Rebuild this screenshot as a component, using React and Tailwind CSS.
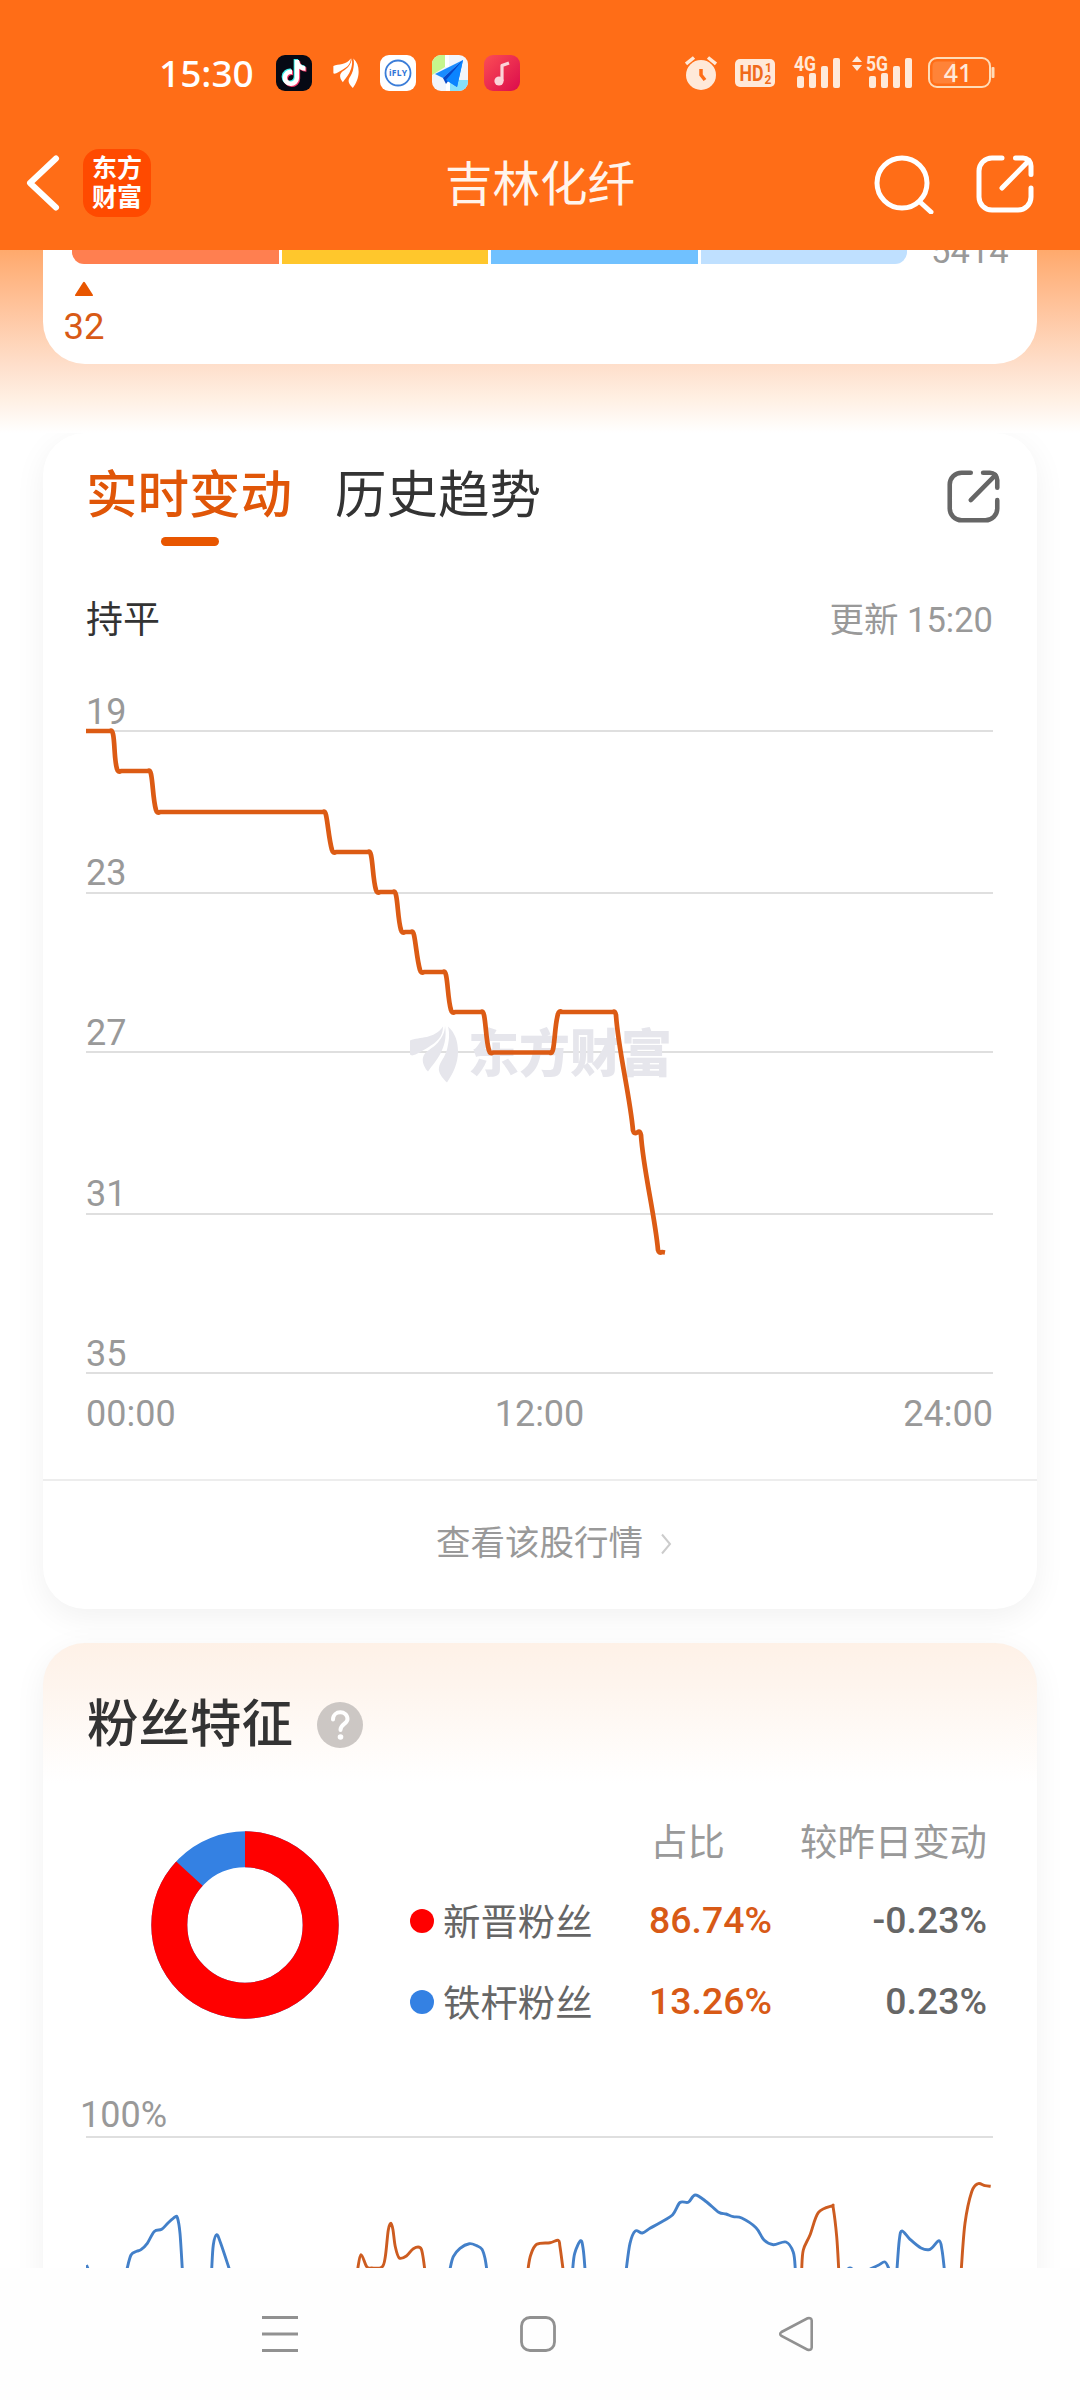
import React from 'react';
import { FaTiktok } from 'react-icons/fa6';

// [x, y] pairs, straight runs of the ranking line
const RANK_STEPS = [
  [[0, 0], [26, 0]],
  [[32, 40], [64, 40]],
  [[71, 81], [239, 81]],
  [[247, 121], [284, 121]],
  [[291, 161], [309, 161]],
  [[316, 201], [327, 201]],
  [[335, 241], [359, 241]],
  [[366, 281], [397, 281]],
  [[404, 321.5], [466, 321.5]],
  [[473, 281], [529, 281]],
  [[548, 401.5], [554, 401]],
  [[573, 521], [579, 521.5]],
];

const BLUE_LINES = [
  [[0.5, 127], [2.5, 132]],
  [[41, 131], [45, 117], [50.7, 113.3], [55, 111.7], [61.3, 105.3], [68.3, 93.5], [75.7, 91.3], [82.3, 84.7], [89, 79], [91.5, 80], [94, 95.3], [96.3, 131]],
  [[125.7, 131], [127.3, 107], [130.7, 96.7], [134.7, 105.3], [143.3, 131]],
  [[364, 131], [367.3, 118.7], [374, 110.3], [383.3, 105.7], [390.7, 107.7], [396, 111.3], [399, 120.3], [400.7, 131]],
  [[486.7, 131], [488.7, 115.3], [494.7, 102.7], [497.3, 112], [499, 131]],
  [[540.3, 131], [544, 105.3], [549.3, 93], [556.3, 95], [564, 90.3], [574, 84.7], [586.7, 76.7], [594, 64.5], [602.3, 64.3], [609.3, 57], [620.7, 64], [632.7, 74.3], [640, 76], [647.3, 78.7], [655.7, 80], [670, 89.7], [678, 102], [687.3, 106.7], [700, 104], [707.3, 114.3], [709.3, 131]],
  [[761, 131.5], [764, 130], [767, 131.5]],
  [[784, 131], [792.3, 127.3], [799, 124], [803, 131]],
  [[811, 131], [813.3, 102], [816, 93], [824, 101.3], [835, 110], [844, 111.3], [853, 102.7], [856, 112], [858.3, 131]],
];

const ORANGE_LINES = [
  [[271.7, 131], [275, 116.7], [280.7, 128.7], [285.7, 130], [296, 129], [299.3, 118.7], [302.3, 92], [305, 85.3], [307, 92], [309.3, 108.7], [313.3, 120], [320.7, 117.7], [327.3, 110.7], [334.3, 109.7], [336.7, 117], [338.7, 131]],
  [[442, 131], [444.7, 117], [450.7, 106.3], [464, 104.7], [472.3, 102.3], [474, 108.7], [477, 131]],
  [[715.7, 131], [717.3, 112], [724, 97], [732.3, 74.7], [745.7, 68], [747.3, 70.3], [750.7, 98.7], [752.7, 131]],
  [[875.3, 131], [879, 85.3], [885.7, 53.7], [892, 45.7], [899, 47.7], [904.7, 48.3]],
];

const FANS = [
  { name: '新晋粉丝', ratio: '86.74%', diff: '-0.23%', dot: 'bg-[#ff0000]' },
  { name: '铁杆粉丝', ratio: '13.26%', diff: '0.23%', dot: 'bg-[#3481e3]' },
];

const stepPath = (steps) =>
  steps.map(([a, b], i) => {
    if (i === 0) return `M${a[0]} ${a[1]} L${b[0] - 2} ${b[1]}`;
    const prev = steps[i - 1][1];
    const dir = a[1] > prev[1] ? 1 : -1;
    const h = (a[1] - prev[1]) * 0.3;
    return `Q${prev[0]} ${prev[1] - dir * 1.5} ${prev[0] + 1} ${prev[1] + dir * 3} C${prev[0] + 3} ${prev[1] + h} ${a[0] - 4} ${a[1] - h} ${a[0] - 1} ${a[1] - dir * 2} Q${a[0]} ${a[1] + dir * 2} ${a[0] + 3} ${a[1]} L${b[0] - (i < steps.length - 1 ? 2 : 0)} ${b[1]}`;
  }).join(' ');

// Catmull-Rom through the points
const smooth = (pts) => {
  let d = `M${pts[0][0]} ${pts[0][1]}`;
  for (let i = 0; i < pts.length - 1; i++) {
    const p0 = pts[i - 1] || pts[i];
    const p1 = pts[i];
    const p2 = pts[i + 1];
    const p3 = pts[i + 2] || p2;
    d += ` C${p1[0] + (p2[0] - p0[0]) / 6} ${p1[1] + (p2[1] - p0[1]) / 6} ${p2[0] - (p3[0] - p1[0]) / 6} ${p2[1] - (p3[1] - p1[1]) / 6} ${p2[0]} ${p2[1]}`;
  }
  return d;
};

function Wing({ className }) {
  return (
    <svg viewBox="0 0 48 57" className={className} fill="currentColor">
      <path d="M0 15 C10 11 24 14 33 1 C33 12 26 17 18 22 C11 26 7 29 2 30 L0 29 Z" />
      <path d="M35 0 C37 13 34 21 30 29 C26 36 22 40 18 46 C14 42 12 36 13 32 C15 25 23 23 28 17 C32 12 35 7 35 0 Z" />
      <path d="M38 1 C45 7 48 16 48 26 C48 38 43 48 37 57 C32 52 28 47 29 42 C30 36 35 32 37 24 C39 16 40 8 38 1 Z" />
    </svg>
  );
}

function ShareIcon({ className }) {
  return (
    <svg viewBox="0 0 58 58" className={className} fill="none" stroke="currentColor" strokeWidth="5" strokeLinecap="round" strokeLinejoin="round">
      <path d="M26 3 H16 A13 13 0 0 0 3 16 V42 A13 13 0 0 0 16 55 H42 A13 13 0 0 0 55 42 V33" />
      <path d="M39.500 3 H47 A8 8 0 0 1 55 11 V19.500" />
      <path d="M53 5.500 L26 33" />
    </svg>
  );
}

function Signal() {
  return (
    <>
      <rect x="3" y="20" width="7" height="12" rx="2" />
      <rect x="15" y="17" width="7" height="15" rx="2" />
      <rect x="27" y="10" width="7" height="22" rx="2" />
      <rect x="39" y="2" width="7" height="30" rx="2" />
    </>
  );
}

function StatusBar() {
  return (
    <div className="h-[110px] pt-[35px] pl-[159px] pr-[85px] flex items-center justify-between">
      <div className="flex items-center">
        <span className="w-[117px] text-[37px] leading-none font-medium font-['Noto_Sans',sans-serif]">15:30</span>
        <div className="flex gap-4">
          <div className="relative w-9 h-9 rounded-[9px] bg-[#060914]">
            <FaTiktok size={26} className="absolute left-[4px] top-[4px] text-[#3ff0ea]" />
            <FaTiktok size={26} className="absolute left-[6px] top-[6px] text-[#f5396a]" />
            <FaTiktok size={26} className="absolute left-[5px] top-[5px] text-white" />
          </div>
          <div className="w-9 h-9 flex items-center justify-center">
            <Wing className="w-[26px] h-[30px]" />
          </div>
          <svg viewBox="0 0 36 36" className="w-9 h-9">
            <rect width="36" height="36" rx="9" fill="#fff" />
            <circle cx="18" cy="18" r="12.500" fill="none" stroke="#3b7dd8" strokeWidth="1.800" />
            <text x="18" y="21" textAnchor="middle" fontSize="8.500" fontWeight="700" fontFamily="Noto Sans" fill="#2f74d6" textLength="18">iFLY</text>
          </svg>
          <svg viewBox="0 0 36 36" className="w-9 h-9">
            <clipPath id="mapClip"><rect width="36" height="36" rx="9" /></clipPath>
            <g clipPath="url(#mapClip)">
              <rect width="36" height="36" fill="#f2f5fb" />
              <path d="M0 0 H13 V12 L0 20 Z" fill="#c6f68d" />
              <path d="M18 25 H36 V36 H18 Z" fill="#86e0fb" />
              <path d="M13 0 H17 V12 H13 Z M14 26 H18 V36 H14 Z" fill="#fff" />
            </g>
            <path d="M31 5 L3 19 L11 23 Z" fill="#1a8bff" />
            <path d="M31 5 L11 23 L25 32 Z" fill="#0a7dfb" />
            <path d="M11 23 L31 5 L14 29 Z" fill="#0748c9" />
            <path d="M31 5 L14 25 L25 32 Z" fill="#0b84ff" />
          </svg>
          <svg viewBox="0 0 36 36" className="w-9 h-9">
            <linearGradient id="musicBg" x1="0" y1="0" x2="1" y2="1">
              <stop offset="0" stopColor="#fb4d55" />
              <stop offset="1" stopColor="#db0b4c" />
            </linearGradient>
            <rect width="36" height="36" rx="9" fill="url(#musicBg)" />
            <circle cx="15" cy="26" r="4.600" fill="#fbd3d8" />
            <path d="M18 26 V10.500 L25 8" fill="none" stroke="#fbd3d8" strokeWidth="3.200" strokeLinejoin="round" />
          </svg>
        </div>
      </div>

      <div className="flex items-center text-[#ffe9d9]">
        <svg viewBox="0 0 32 34" className="w-[32px] h-[34px]" fill="none" stroke="currentColor">
          <circle cx="16" cy="19" r="15" fill="currentColor" stroke="none" />
          <path d="M1 8 L9 1.500 M31 8 L23 1.500" strokeWidth="3.500" />
          <path d="M16 13 V19 L20 24" stroke="#ff6d17" strokeWidth="3.500" />
        </svg>
        <svg viewBox="0 0 40 28" className="ml-[18px] w-[40px] h-[28px]">
          <rect width="40" height="28" rx="5" fill="currentColor" />
          <g fill="#f06a1a" fontWeight="700" fontFamily="Roboto">
            <text x="4.500" y="22" fontSize="22" textLength="24" lengthAdjust="spacingAndGlyphs">HD</text>
            <text x="30" y="13" fontSize="12">1</text>
            <text x="29.500" y="25" fontSize="12">2</text>
          </g>
        </svg>
        <svg viewBox="0 0 46 33" className="ml-[19px] w-[46px] h-[33px] overflow-visible" fill="currentColor">
          <text x="0" y="15" fontSize="21" fontWeight="700" fontFamily="Roboto" textLength="22" lengthAdjust="spacingAndGlyphs">4G</text>
          <Signal />
        </svg>
        <svg viewBox="-14 0 60 33" className="ml-[12px] w-[60px] h-[33px] overflow-visible" fill="currentColor">
          <path d="M-14 6 L-9 0 L-4 6 Z M-14 9 L-9 15 L-4 9 Z" />
          <text x="0" y="15" fontSize="21" fontWeight="700" fontFamily="Roboto" textLength="22" lengthAdjust="spacingAndGlyphs">5G</text>
          <Signal />
        </svg>
        <svg viewBox="0 0 67 31" className="ml-[16px] w-[67px] h-[31px] overflow-visible">
          <rect x="1" y="1" width="61" height="29" rx="8" fill="none" stroke="#ffdcb8" strokeWidth="2" />
          <path d="M9 4.500 H27 V26.500 H9 Q4.500 26.500 4.500 22 V9 Q4.500 4.500 9 4.500 Z" fill="#ff8338" />
          <rect x="63.500" y="10" width="3" height="11" rx="1" fill="#ffdcb8" />
          <text x="30" y="24.500" textAnchor="middle" fontSize="25" fontWeight="500" fontFamily="Noto Sans" fill="#ffe9d9">41</text>
        </svg>
      </div>
    </div>
  );
}

function Header() {
  return (
    <div className="h-[140px] pt-[5px] px-[46px] grid grid-cols-[1fr_auto_1fr] items-center">
      <div className="-ml-[20px] flex items-center">
        <svg viewBox="0 0 34 58" className="w-[34px] h-[58px]" fill="none" stroke="currentColor" strokeWidth="6" strokeLinecap="round" strokeLinejoin="round">
          <path d="M30 4.500 L4 29 L30 53.500" />
        </svg>
        <div className="ml-[23px] pb-[3px] w-[68px] h-[68px] rounded-[16px] bg-[#ff4a00] flex flex-col items-center justify-center text-[25px] leading-[29px] font-bold font-['Noto_Sans_CJK_SC',sans-serif]">
          <span>东方</span>
          <span>财富</span>
        </div>
      </div>
      <h1 className="pb-[3px] text-[47.500px] leading-[60px] text-[#fff4ec] font-['Noto_Sans_CJK_SC',sans-serif]">吉林化纤</h1>
      <div className="pt-[2px] flex items-center justify-end gap-[42px]">
        <svg viewBox="0 0 60 60" className="w-[60px] h-[60px]" fill="none" stroke="currentColor" strokeWidth="5" strokeLinecap="round">
          <circle cx="28" cy="29" r="25" />
          <path d="M46 48 L57 58" />
        </svg>
        <ShareIcon className="w-[58px] h-[58px]" />
      </div>
    </div>
  );
}

function RankCard() {
  return (
    <div className="mx-[43px] h-[114px] rounded-b-[42px] bg-white">
      <div className="flex pl-[29px]">
        <div className="w-[835px] h-[14px] flex gap-[3px] rounded-b-[12px] overflow-hidden">
          <div className="flex-1 bg-[#ff7f50]" />
          <div className="flex-1 bg-[#ffc72c]" />
          <div className="flex-1 bg-[#70c1ff]" />
          <div className="flex-1 bg-[#bfe0ff]" />
        </div>
        <div className="ml-[24px] h-[18px] flex items-end text-[#999]">
          <span className="text-[34.500px] leading-[34px]">5414</span>
        </div>
      </div>
      <div className="w-[82px] h-[80px] flex flex-col items-center text-[#d85a16]">
        <svg viewBox="0 0 20 18" className="mt-[13px] w-[20px] h-[20px]" preserveAspectRatio="none">
          <path d="M10 2 L18 16 H2 Z" fill="#e85600" stroke="#e85600" strokeWidth="2" strokeLinejoin="round" />
        </svg>
        <span className="mt-[9px] text-[36.500px] leading-[42px]">32</span>
      </div>
    </div>
  );
}

function TrendCard() {
  return (
    <section className="relative z-10 mx-[43px] h-[1176px] rounded-[42px] bg-white shadow-[0_8px_32px_rgba(0,0,0,0.06)]">
      <div className="h-[113px] pl-[43px] pr-[37px] pt-[32px] flex justify-between">
        <div className="flex gap-[43px] text-[51.500px] leading-[62px]">
          <div className="flex flex-col items-center text-[#e05608]">
            <span className="font-medium">实时变动</span>
            <div className="ml-[2px] mt-[10px] w-[58px] h-[9px] rounded-full bg-[#e85600]" />
          </div>
          <span className="text-[#333]">历史趋势</span>
        </div>
        <ShareIcon className="mt-[5px] w-[53px] h-[53px] text-[#666]" />
      </div>

      <div className="pl-[43px] pr-[44px]">
        <div className="pt-[50px] h-[136px] flex justify-between leading-[50px]">
          <span className="text-[37px] text-[#333]">持平</span>
          <span className="-mt-[1px] text-[34.500px] text-[#999]">更新 15:20</span>
        </div>

        <div className="relative text-[36px] leading-[36px] text-[#999]">
          <div className="h-[50px] flex items-end border-b-2 border-[#dfdfdf]">19</div>
          <div className="h-[162px] flex items-end pb-[1px] border-b-2 border-[#dfdfdf]">23</div>
          <div className="h-[159px] flex items-end border-b-2 border-[#dfdfdf]">27</div>
          <div className="h-[162px] flex items-end pb-[1px] border-b-2 border-[#dfdfdf]">31</div>
          <div className="h-[159px] flex items-end border-b-2 border-[#dfdfdf]">35</div>
          <div className="absolute left-[324px] top-[342px] flex items-center text-[#e6e6ec]">
            <Wing className="w-[48px] h-[58px]" />
            <span className="mt-[2px] ml-[10px] text-[51px] leading-[58px] font-black">东方财富</span>
          </div>
          <svg viewBox="0 -10 907 560" className="absolute left-0 top-[39px] w-[907px] h-[560px]" fill="none" stroke="#dc5b14" strokeWidth="4.700" strokeLinejoin="round">
            <path d={stepPath(RANK_STEPS)} />
          </svg>
        </div>
        <div className="pt-[20px] h-[105px] flex justify-between text-[36px] leading-[40px] text-[#999]">
          <span>00:00</span>
          <span>12:00</span>
          <span>24:00</span>
        </div>
      </div>

      <div className="h-[128px] pl-[28px] border-t-2 border-[#ededed] flex items-center justify-center gap-[17px] text-[34.500px] text-[#999]">
        <span>查看该股行情</span>
        <svg viewBox="0 0 12 22" className="w-[12px] h-[22px]" fill="none" stroke="#ccc" strokeWidth="2">
          <path d="M2 1.500 L10 11 L2 20.500" />
        </svg>
      </div>
    </section>
  );
}

function FansCard() {
  const c = 2 * Math.PI * 75.7;
  return (
    <section className="mt-[34px] mx-[43px] h-[700px] rounded-t-[42px] bg-white bg-[linear-gradient(to_bottom,#fef1e7_0px,#fef5ee_45px,#ffffff_140px)] shadow-[0_8px_32px_rgba(0,0,0,0.06)]">
      <div className="pt-[51px] pl-[44px] flex items-center gap-[24px]">
        <h2 className="text-[51.500px] leading-[62px] font-medium text-[#333]">粉丝特征</h2>
        <svg viewBox="0 0 46 46" className="w-[46px] h-[46px]">
          <circle cx="23" cy="23" r="23" fill="#ccc7c4" />
          <path d="M16 17.500 C16 8 30.500 8 30.500 17 C30.500 22 23.500 22 23.500 28" fill="none" stroke="#fff" strokeWidth="4" strokeLinecap="round" />
          <circle cx="23.500" cy="35" r="2.800" fill="#fff" />
        </svg>
      </div>

      <div className="mt-[50px] pl-[108px] pr-[50px] flex text-[37.400px]">
        <svg viewBox="0 0 188 188" className="mt-[25px] w-[188px] h-[188px] -rotate-90" fill="none" strokeWidth="36">
          <circle cx="94" cy="94" r="75.700" stroke="#3481e3" />
          <circle cx="94" cy="94" r="75.700" stroke="#ff0000" strokeDasharray={`${c * 0.8674} ${c}`} />
        </svg>
        <div className="ml-[71px] flex-1">
          <div className="h-[74px] flex items-center justify-end text-[#999]">
            <span>占比</span>
            <span className="w-[262px] text-right">较昨日变动</span>
          </div>
          {FANS.map(f => (
            <div key={f.name} className="h-[81px] flex items-center text-[#666]">
              <span className={`w-6 h-6 rounded-full ${f.dot}`} />
              <span className="ml-[9px] pt-[5px] w-[206px]">{f.name}</span>
              <span className="font-medium text-[#d85a16]">{f.ratio}</span>
              <span className="flex-1 text-right font-medium">{f.diff}</span>
            </div>
          ))}
        </div>
      </div>

      <div className="mt-[45px] pl-[43px] pr-[44px]">
        <div className="h-[51px] flex items-end pb-[1px] border-b-2 border-[#dfdfdf] text-[36px] leading-[40px] text-[#999]">
          <span className="-ml-[6px]">100%</span>
        </div>
        <svg viewBox="0 0 907 132" className="w-[907px] h-[132px]" fill="none" strokeWidth="2.900" strokeLinejoin="round">
          {BLUE_LINES.map((pts, i) => <path key={i} d={smooth(pts)} stroke="#4380c9" />)}
          {ORANGE_LINES.map((pts, i) => <path key={i} d={smooth(pts)} stroke="#cd5c20" />)}
        </svg>
      </div>
    </section>
  );
}

function NavBar() {
  return (
    <nav className="h-[132px] bg-[#fefefe] pl-[262px] pr-[266px] flex items-center justify-between">
      <svg viewBox="0 0 36 36" className="w-9 h-9" stroke="#919191" strokeWidth="3">
        <path d="M0 1.500 H36 M0 18 H36 M0 34.500 H36" />
      </svg>
      <svg viewBox="0 0 36 36" className="w-9 h-9" fill="none" stroke="#919191" strokeWidth="2.800">
        <rect x="1.500" y="1.500" width="33" height="33" rx="8.500" />
      </svg>
      <svg viewBox="0 0 36 36" className="w-9 h-9" fill="none" stroke="#919191" strokeWidth="2.600">
        <path d="M3.500 16 L29.500 2.300 Q33.500 1.500 33.700 4.500 V31.500 Q33.500 34.500 29.500 33.700 L3.500 20 Q0.800 18 3.500 16 Z" />
      </svg>
    </nav>
  );
}

export default function App() {
  return (
    <div className="w-[1080px] h-[2400px] overflow-hidden flex flex-col bg-white font-['Roboto','Noto_Sans_CJK_SC',sans-serif]">
      <header className="h-[250px] shrink-0 bg-[#ff6d17] text-white">
        <StatusBar />
        <Header />
      </header>
      <main className="h-[2018px] shrink-0 overflow-hidden bg-[linear-gradient(to_bottom,#ffa96c_0px,#ffc096_50px,#fedfcb_115px,#fff0e4_150px,#ffffff_183px)]">
        <RankCard />
        <div className="mt-[69px] h-[1835px] overflow-hidden">
          <TrendCard />
          <FansCard />
        </div>
      </main>
      <NavBar />
    </div>
  );
}
